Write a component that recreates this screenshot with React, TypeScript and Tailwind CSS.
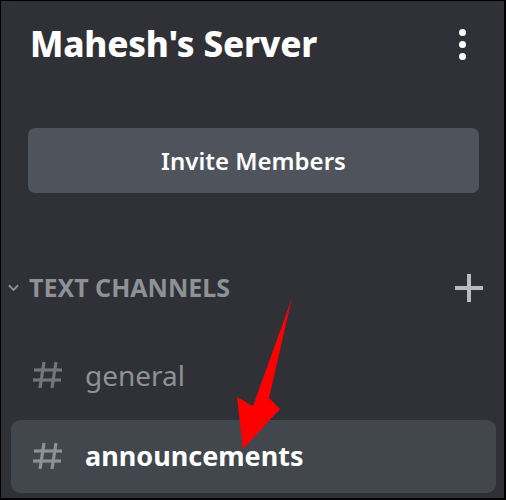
// Hash glyph used for channels
function Hash({ className }: { className?: string }) {
  return (
    <svg viewBox="0 0 30 28" className={className} fill="none" stroke="currentColor" strokeWidth="3.2">
      <path d="M11 1 L7 27" />
      <path d="M23 1 L19 27" />
      <path d="M1 9 H29" />
      <path d="M0 19 H28" />
    </svg>
  );
}

export default function App() {
  return (
    <div
      className="relative w-[506px] h-[500px] overflow-hidden bg-[#2f3136] border border-r-2 border-b-2 border-black"
      style={{ fontFamily: '"Noto Sans", "Open Sans", sans-serif' }}
    >
      {/* header */}
      <div className="flex items-center justify-between pl-[29px] pr-[38px] pt-[16px] h-[70px]">
        <h1 className="text-[35px] font-extrabold text-white tracking-[-0.2px]">Mahesh's Server</h1>
        <div className="flex flex-col gap-[5px] items-center">
          <span className="w-[7px] h-[7px] rounded-full bg-white" />
          <span className="w-[7px] h-[7px] rounded-full bg-white" />
          <span className="w-[7px] h-[7px] rounded-full bg-white" />
        </div>
      </div>

      {/* invite */}
      <div className="px-[27px] pt-[57px]">
        <button className="w-[451px] h-[65px] rounded-[7px] bg-[#4f545c] text-white text-[24px] font-semibold">
          Invite Members
        </button>
      </div>

      {/* category */}
      <div className="flex items-center justify-between pl-[7px] pr-[20px] pt-[76px]">
        <div className="flex items-center gap-[10px]">
          <svg viewBox="0 0 12 8" className="w-[11px] h-[8px] text-[#8e9297]" fill="none" stroke="currentColor" strokeWidth="2">
            <path d="M1 1 L6 6 L11 1" />
          </svg>
          <span className="text-[25px] font-bold text-[#8e9297] uppercase">Text Channels</span>
        </div>
        <svg viewBox="0 0 30 30" className="w-[30px] h-[30px] text-[#b9bbbe]" fill="none" stroke="currentColor" strokeWidth="4">
          <path d="M15 1 V29" />
          <path d="M1 15 H29" />
        </svg>
      </div>

      {/* channels */}
      <div className="flex flex-col gap-[25px] px-[10px] pt-[48px]">
        <div className="flex items-center gap-[22px] pl-[22px] h-[40px]">
          <Hash className="w-[30px] h-[28px] text-[#72767d]" />
          <span className="text-[28px] text-[#8e9297]">general</span>
        </div>
        <div className="flex items-center gap-[22px] pl-[22px] h-[73px] w-[485px] rounded-[9px] bg-[#42464d]">
          <Hash className="w-[30px] h-[28px] text-[#8e9297]" />
          <span className="text-[27px] font-bold text-white">announcements</span>
        </div>
      </div>

      {/* annotation arrow */}
      <svg className="absolute left-0 top-0 w-[506px] h-[500px] pointer-events-none" viewBox="0 0 506 500">
        <polygon points="291,297 268,397 279,408 242,448 236,396 252,405" fill="#ff0000" />
      </svg>
    </div>
  );
}
